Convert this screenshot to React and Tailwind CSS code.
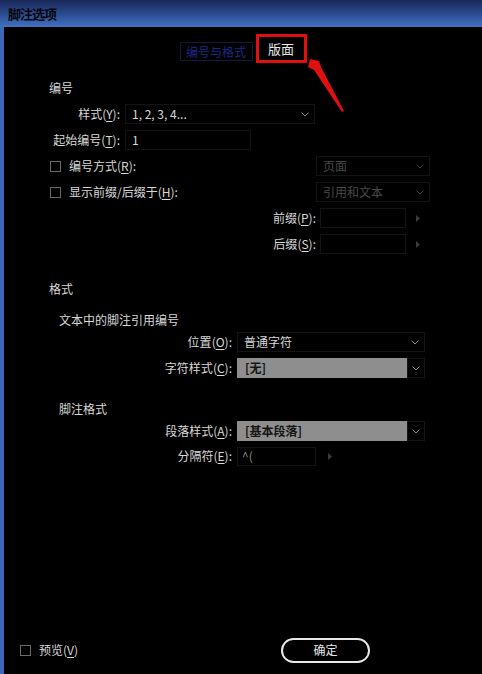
const font = { fontFamily: '"Noto Sans CJK SC", "Microsoft YaHei", sans-serif' };

const Chevron = ({ dim }) => (
    <svg width="8" height="5" viewBox="0 0 8 5" className="shrink-0">
        <path d="M0.5 0.5 L4 4 L7.5 0.5" fill="none" stroke={dim ? '#3a3a3a' : '#8a8a8a'} strokeWidth="1" />
    </svg>
);

const Tri = () => (
    <svg width="4" height="7" viewBox="0 0 4 7">
        <path d="M0 0 L4 3.5 L0 7 Z" fill="#3c3c3c" />
    </svg>
);

const Label = ({ text, k }) => (
    <span>
        {text}(<u className="underline-offset-2">{k}</u>):
    </span>
);

const Box = () => <span className="w-[11px] h-[11px] border border-[#6a6a6a] shrink-0"></span>;

const Select = ({ w, value, dim }) => (
    <div className={`${w} h-[20px] border border-[#141414] flex items-center justify-between pl-[6px] pr-[5px] ${dim ? 'text-[#4a4a4a]' : 'text-[#d8d8d8]'}`}>
        <span>{value}</span>
        <Chevron dim={dim} />
    </div>
);

const GraySelect = ({ value }) => (
    <div className="flex h-[20px]">
        <div className="w-[170px] bg-[#8e8e8e] text-[#161616] font-bold pl-[8px] flex items-center">{value}</div>
        <div className="w-[18px] border border-[#141414] flex items-center justify-center"><Chevron /></div>
    </div>
);

export default function App() {
    return (
        <div className="relative w-[482px] h-[674px] bg-black flex flex-col text-[12px] text-[#d8d8d8] overflow-hidden" style={font}>
            <div className="h-[27px] shrink-0 bg-linear-to-b from-[#1a2858] via-[#2a4a8e] to-[#4272c0] flex items-center pl-[8px]">
                <h1 className="text-[13px] font-bold tracking-[-1px] text-[#05050a]">脚注选项</h1>
            </div>
            <div className="flex-1 border-l-[4px] border-[#3a68b4] flex flex-col">
                {/* tabs */}
                <div className="mt-[7px] h-[29px] flex justify-center items-center gap-[3px]">
                    <div className="w-[73px] h-[19px] mt-[6px] border border-[#14183a] text-[#1c2a88] flex items-center justify-center">编号与格式</div>
                    <div className="w-[51px] h-[29px] border-[3px] border-[#e01010] flex items-center justify-center text-[#e8e8e8] text-[13px]">版面</div>
                </div>

                <div className="pl-[45px] mt-[12px] h-[26px] flex items-center">编号</div>

                <div className="flex items-center h-[26px]">
                    <div className="w-[116px] text-right"><Label text="样式" k="Y" /></div>
                    <div className="ml-[5px]"><Select w="w-[190px]" value="1, 2, 3, 4..." /></div>
                </div>
                <div className="flex items-center h-[26px]">
                    <div className="w-[116px] text-right"><Label text="起始编号" k="T" /></div>
                    <div className="ml-[5px] w-[126px] h-[20px] border border-[#141414] pl-[6px] flex items-center">1</div>
                </div>
                <div className="flex items-center h-[26px] pl-[46px]">
                    <Box />
                    <span className="ml-[8px] w-[247px]"><Label text="编号方式" k="R" /></span>
                    <Select w="w-[114px]" value="页面" dim />
                </div>
                <div className="flex items-center h-[26px] pl-[46px]">
                    <Box />
                    <span className="ml-[8px] w-[247px]"><Label text="显示前缀/后缀于" k="H" /></span>
                    <Select w="w-[114px]" value="引用和文本" dim />
                </div>
                <div className="flex items-center h-[26px]">
                    <div className="w-[312px] text-right"><Label text="前缀" k="P" /></div>
                    <div className="ml-[4px] w-[86px] h-[20px] border border-[#141414]"></div>
                    <div className="ml-[10px]"><Tri /></div>
                </div>
                <div className="flex items-center h-[26px]">
                    <div className="w-[312px] text-right"><Label text="后缀" k="S" /></div>
                    <div className="ml-[4px] w-[86px] h-[20px] border border-[#141414]"></div>
                    <div className="ml-[10px]"><Tri /></div>
                </div>

                <div className="pl-[45px] mt-[22px] h-[20px] flex items-center">格式</div>
                <div className="pl-[55px] mt-[11px] h-[20px] flex items-center">文本中的脚注引用编号</div>
                <div className="flex items-center h-[22px] mt-[1px]">
                    <div className="w-[228px] text-right"><Label text="位置" k="O" /></div>
                    <div className="ml-[5px]"><Select w="w-[188px]" value="普通字符" /></div>
                </div>
                <div className="flex items-center h-[26px] mt-[2px]">
                    <div className="w-[228px] text-right"><Label text="字符样式" k="C" /></div>
                    <div className="ml-[5px]"><GraySelect value="[无]" /></div>
                </div>
                <div className="pl-[55px] mt-[18px] h-[20px] flex items-center">脚注格式</div>
                <div className="flex items-center h-[22px] mt-[1px]">
                    <div className="w-[228px] text-right"><Label text="段落样式" k="A" /></div>
                    <div className="ml-[5px]"><GraySelect value="[基本段落]" /></div>
                </div>
                <div className="flex items-center h-[26px] mt-[1px]">
                    <div className="w-[228px] text-right"><Label text="分隔符" k="E" /></div>
                    <div className="ml-[5px] w-[79px] h-[19px] border border-[#141414] pl-[4px] flex items-center text-[#8a8a8a]">^(</div>
                    <div className="ml-[12px]"><Tri /></div>
                </div>

                <div className="mt-auto mb-[12px] flex items-center h-[24px] pl-[16px]">
                    <Box />
                    <span className="ml-[8px]">预览(<u className="underline-offset-2">V</u>)</span>
                    <button className="ml-[203px] w-[89px] h-[25px] rounded-full border-2 border-[#e8e8e8] text-[#e8e8e8] flex items-center justify-center">确定</button>
                </div>
            </div>

            <svg className="absolute left-[300px] top-[55px]" width="50" height="60" viewBox="0 0 50 60">
                <path d="M10 4 L19 6 L21 12 L44 56 L42 57 L14 15 L8 12 Z" fill="#e01010" />
            </svg>
        </div>
    );
}
